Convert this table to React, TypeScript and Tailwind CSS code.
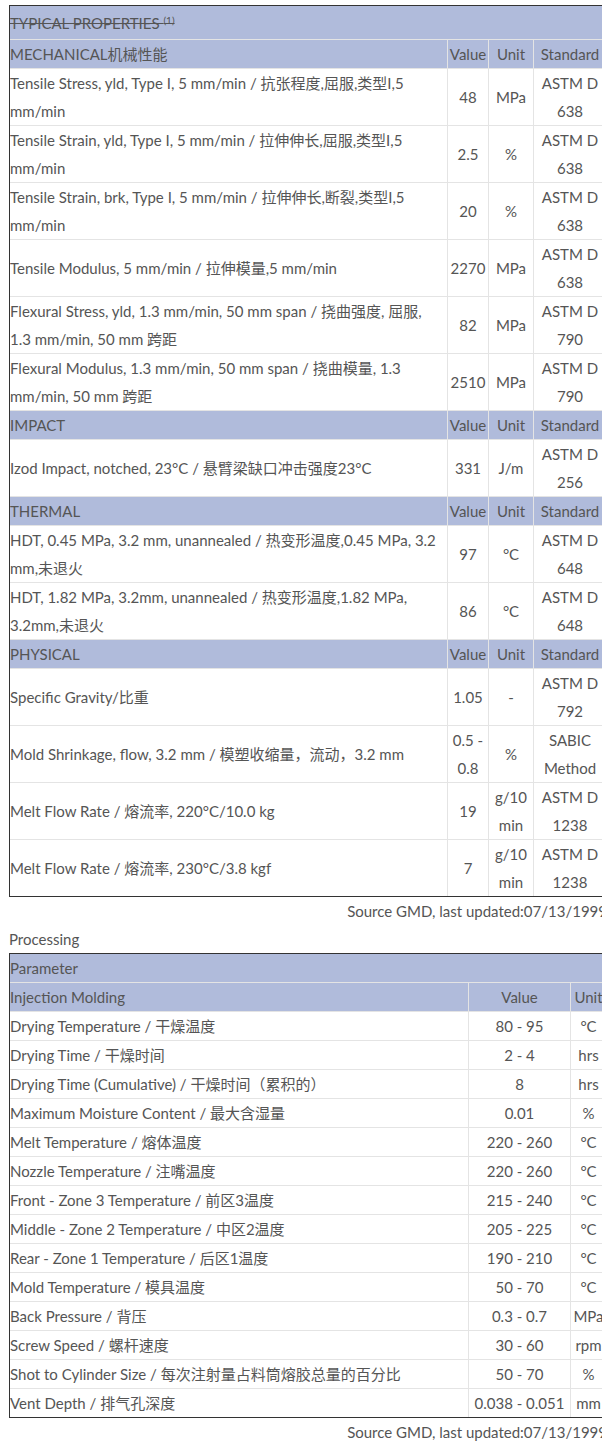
import type { ReactNode } from "react";

type Cell = string | string[];

type PropRow = {
  desc: Cell;
  value: Cell;
  unit: Cell;
  standard: Cell;
};

type Section = {
  title: string;
  rows: PropRow[];
};

const sections: Section[] = [
  {
    title: "MECHANICAL机械性能",
    rows: [
      {
        desc: ["Tensile Stress, yld, Type I, 5 mm/min / 抗张程度,屈服,类型I,5", "mm/min"],
        value: "48",
        unit: "MPa",
        standard: ["ASTM D", "638"],
      },
      {
        desc: ["Tensile Strain, yld, Type I, 5 mm/min / 拉伸伸长,屈服,类型I,5", "mm/min"],
        value: "2.5",
        unit: "%",
        standard: ["ASTM D", "638"],
      },
      {
        desc: ["Tensile Strain, brk, Type I, 5 mm/min / 拉伸伸长,断裂,类型I,5", "mm/min"],
        value: "20",
        unit: "%",
        standard: ["ASTM D", "638"],
      },
      {
        desc: "Tensile Modulus, 5 mm/min / 拉伸模量,5 mm/min",
        value: "2270",
        unit: "MPa",
        standard: ["ASTM D", "638"],
      },
      {
        desc: ["Flexural Stress, yld, 1.3 mm/min, 50 mm span / 挠曲强度, 屈服,", "1.3 mm/min, 50 mm 跨距"],
        value: "82",
        unit: "MPa",
        standard: ["ASTM D", "790"],
      },
      {
        desc: ["Flexural Modulus, 1.3 mm/min, 50 mm span / 挠曲模量, 1.3", "mm/min, 50 mm 跨距"],
        value: "2510",
        unit: "MPa",
        standard: ["ASTM D", "790"],
      },
    ],
  },
  {
    title: "IMPACT",
    rows: [
      {
        desc: "Izod Impact, notched, 23°C / 悬臂梁缺口冲击强度23°C",
        value: "331",
        unit: "J/m",
        standard: ["ASTM D", "256"],
      },
    ],
  },
  {
    title: "THERMAL",
    rows: [
      {
        desc: ["HDT, 0.45 MPa, 3.2 mm, unannealed / 热变形温度,0.45 MPa, 3.2", "mm,未退火"],
        value: "97",
        unit: "°C",
        standard: ["ASTM D", "648"],
      },
      {
        desc: ["HDT, 1.82 MPa, 3.2mm, unannealed / 热变形温度,1.82 MPa,", "3.2mm,未退火"],
        value: "86",
        unit: "°C",
        standard: ["ASTM D", "648"],
      },
    ],
  },
  {
    title: "PHYSICAL",
    rows: [
      {
        desc: "Specific Gravity/比重",
        value: "1.05",
        unit: "-",
        standard: ["ASTM D", "792"],
      },
      {
        desc: "Mold Shrinkage, flow, 3.2 mm / 模塑收缩量，流动，3.2 mm",
        value: ["0.5 -", "0.8"],
        unit: "%",
        standard: ["SABIC", "Method"],
      },
      {
        desc: "Melt Flow Rate / 熔流率, 220°C/10.0 kg",
        value: "19",
        unit: ["g/10", "min"],
        standard: ["ASTM D", "1238"],
      },
      {
        desc: "Melt Flow Rate / 熔流率, 230°C/3.8 kgf",
        value: "7",
        unit: ["g/10", "min"],
        standard: ["ASTM D", "1238"],
      },
    ],
  },
];

const processing: [string, string, string][] = [
  ["Drying Temperature / 干燥温度", "80 - 95", "°C"],
  ["Drying Time / 干燥时间", "2 - 4", "hrs"],
  ["Drying Time (Cumulative) / 干燥时间（累积的）", "8", "hrs"],
  ["Maximum Moisture Content / 最大含湿量", "0.01", "%"],
  ["Melt Temperature / 熔体温度", "220 - 260", "°C"],
  ["Nozzle Temperature / 注嘴温度", "220 - 260", "°C"],
  ["Front - Zone 3 Temperature / 前区3温度", "215 - 240", "°C"],
  ["Middle - Zone 2 Temperature / 中区2温度", "205 - 225", "°C"],
  ["Rear - Zone 1 Temperature / 后区1温度", "190 - 210", "°C"],
  ["Mold Temperature / 模具温度", "50 - 70", "°C"],
  ["Back Pressure / 背压", "0.3 - 0.7", "MPa"],
  ["Screw Speed / 螺杆速度", "30 - 60", "rpm"],
  ["Shot to Cylinder Size / 每次注射量占料筒熔胶总量的百分比", "50 - 70", "%"],
  ["Vent Depth / 排气孔深度", "0.038 - 0.051", "mm"],
];

function Lines({ cell }: { cell: Cell }) {
  if (typeof cell === "string") return <>{cell}</>;
  return (
    <>
      {cell.map((line, i) => (
        <span key={i} className="block">
          {line}
        </span>
      ))}
    </>
  );
}

function HeadCell({ children, center }: { children?: ReactNode; center?: boolean }) {
  return (
    <div
      className={`flex h-7 items-center overflow-hidden whitespace-nowrap bg-[#b0bbdb] ${
        center ? "justify-center" : ""
      }`}
    >
      {children}
    </div>
  );
}

function DataCell({ children, center }: { children?: ReactNode; center?: boolean }) {
  return (
    <div
      className={`flex h-14 items-center overflow-hidden whitespace-nowrap bg-white ${
        center ? "justify-center text-center" : ""
      }`}
    >
      <div>{children}</div>
    </div>
  );
}

function SourceNote() {
  return (
    <div className="w-[598px] text-right leading-7">Source GMD, last updated:07/13/1999</div>
  );
}

export default function App() {
  return (
    <div
      className="w-full overflow-hidden bg-white pl-[9px] pt-[5px] text-[15px] leading-7 text-[#555]"
      style={{ fontFamily: 'Lato, "Noto Sans CJK SC", sans-serif' }}
    >
      <div className="w-[598px]">
        <div className="grid grid-cols-[437px_40px_44px_72px] gap-px border border-[#333] bg-[#e4e4e4]">
          <div className="col-span-4 flex h-[33px] items-center bg-[#b0bbdb]">
            <span className="line-through">
              TYPICAL PROPERTIES <sup className="text-[10px]">(1)</sup>
            </span>
          </div>
          {sections.map((section) => (
            <Fragmentish key={section.title}>
              <HeadCell>{section.title}</HeadCell>
              <HeadCell center>Value</HeadCell>
              <HeadCell center>Unit</HeadCell>
              <HeadCell center>Standard</HeadCell>
              {section.rows.map((row, i) => (
                <Fragmentish key={i}>
                  <DataCell>
                    <Lines cell={row.desc} />
                  </DataCell>
                  <DataCell center>
                    <Lines cell={row.value} />
                  </DataCell>
                  <DataCell center>
                    <Lines cell={row.unit} />
                  </DataCell>
                  <DataCell center>
                    <Lines cell={row.standard} />
                  </DataCell>
                </Fragmentish>
              ))}
            </Fragmentish>
          ))}
        </div>
        <SourceNote />
      </div>

      <div className="leading-7">Processing</div>

      <div className="w-[598px]">
        <div className="grid grid-cols-[458px_101px_35px] gap-px border border-[#333] bg-[#e4e4e4]">
          <div className="col-span-3 flex h-7 items-center bg-[#b0bbdb]">Parameter</div>
          <HeadCell>Injection Molding</HeadCell>
          <HeadCell center>Value</HeadCell>
          <HeadCell center>Unit</HeadCell>
          {processing.map(([name, value, unit]) => (
            <Fragmentish key={name}>
              <div className="flex h-7 items-center overflow-hidden whitespace-nowrap bg-white">{name}</div>
              <div className="flex h-7 items-center justify-center whitespace-nowrap bg-white">{value}</div>
              <div className="flex h-7 items-center justify-center overflow-visible whitespace-nowrap bg-white">
                {unit}
              </div>
            </Fragmentish>
          ))}
        </div>
        <SourceNote />
      </div>
    </div>
  );
}

function Fragmentish({ children }: { children: ReactNode }) {
  return <>{children}</>;
}
